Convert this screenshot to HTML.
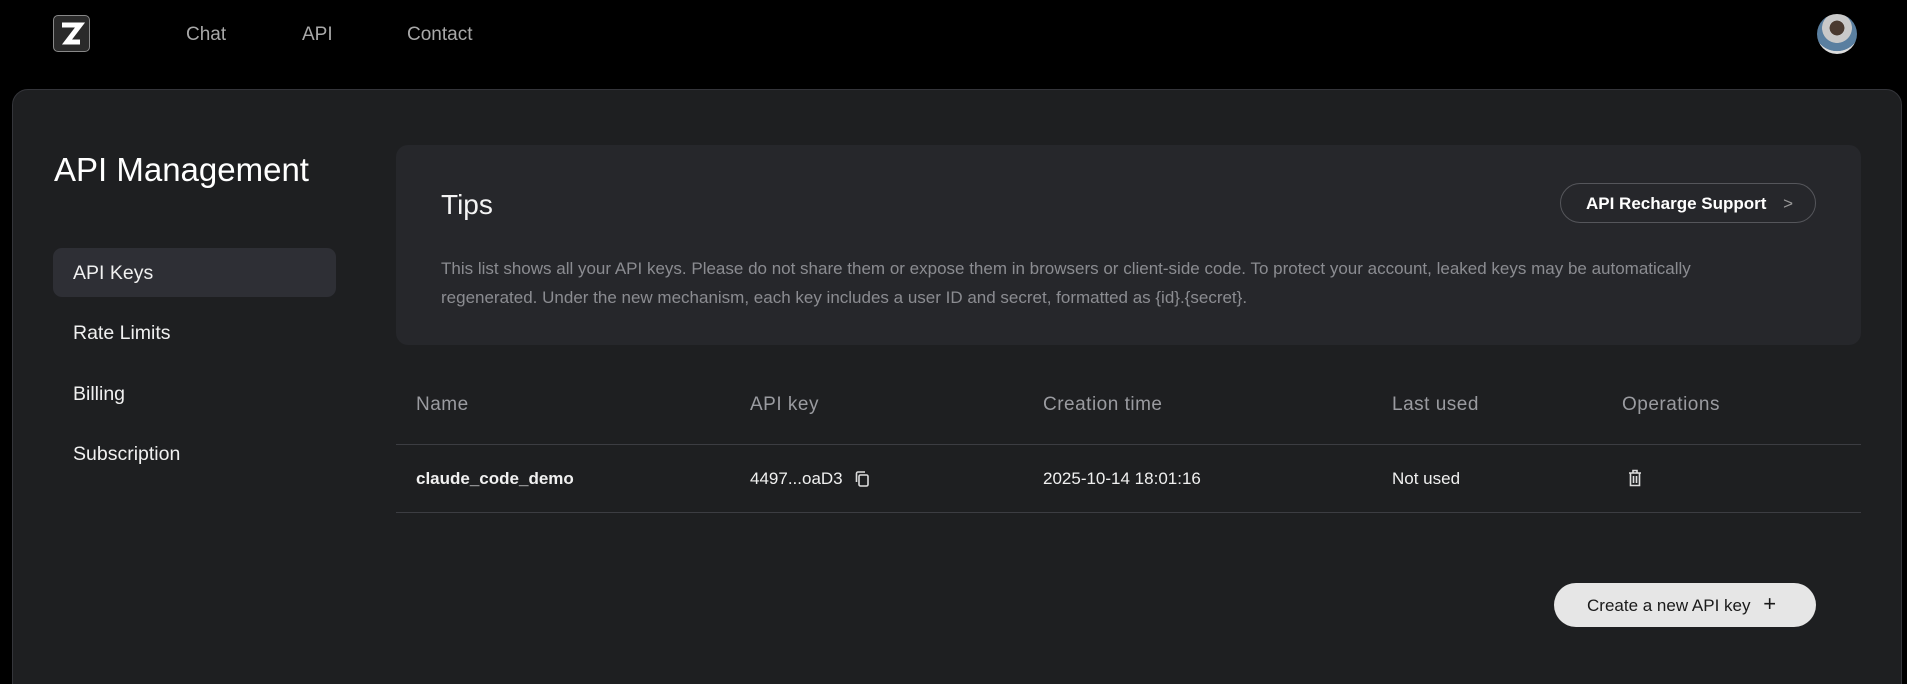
<!DOCTYPE html>
<html style="height:684px;overflow:hidden"><head><meta charset="utf-8"><style>
*{margin:0;padding:0;box-sizing:border-box}
html,body{width:1907px;height:684px;overflow:hidden}
body{background:#000;font-family:"Liberation Sans",sans-serif;position:relative;color:#fff}
.a{position:absolute;white-space:nowrap}
.nav{color:#a8a8a8;font-size:19px;top:24px}
.panel{position:absolute;left:12px;top:89px;width:1890px;height:620px;background:#1e1f21;border:1px solid #34353a;border-radius:16px}
.side{font-size:19.5px;color:#f0f0f0}
.th{font-size:19px;color:#9a9ba0;letter-spacing:.5px;top:394px}
.td{font-size:17px;color:#f0f0f0;top:469px}
</style></head><body>
<div class="a" style="left:53px;top:15px;width:37px;height:37px;border:1.5px solid #888;border-radius:5px;background:#2a2a2a">
<svg width="34" height="34" viewBox="0 0 34 34" style="position:absolute;left:0;top:0"><path d="M8 9H26L13 26H26" stroke="#fff" stroke-width="5" fill="none" stroke-linejoin="miter"/></svg></div>
<div class="a nav" style="left:186px">Chat</div>
<div class="a nav" style="left:302px">API</div>
<div class="a nav" style="left:407px">Contact</div>
<div class="a" style="left:1817px;top:14px;width:40px;height:40px;border-radius:50%;background:radial-gradient(circle at 50% 35%,#4a3a30 0 22%,#c9c9c9 23% 45%,#5a7fa0 46% 70%,#ddd 71%)"></div>
<div class="panel"></div>
<div class="a" style="left:54px;top:151px;font-size:33px;color:#fff">API Management</div>
<div class="a" style="left:53px;top:248px;width:283px;height:49px;background:#2e2f35;border-radius:9px"></div>
<div class="a side" style="left:73px;top:262px">API Keys</div>
<div class="a side" style="left:73px;top:322px">Rate Limits</div>
<div class="a side" style="left:73px;top:383px">Billing</div>
<div class="a side" style="left:73px;top:443px">Subscription</div>
<div class="a" style="left:396px;top:145px;width:1465px;height:200px;background:#26272b;border-radius:12px"></div>
<div class="a" style="left:441px;top:189px;font-size:28px;color:#f4f4f4">Tips</div>
<div class="a" style="left:1560px;top:183px;width:256px;height:40px;border:1px solid #55565b;border-radius:20px;font-size:17px;font-weight:bold;padding:10px 0 0 25px;color:#fff">API Recharge Support <span style="color:#999;font-weight:normal;margin-left:12px">&gt;</span></div>
<div class="a" style="left:441px;top:254px;font-size:17px;line-height:29px;color:#8b8c91;white-space:normal;width:1340px">This list shows all your API keys. Please do not share them or expose them in browsers or client-side code. To protect your account, leaked keys may be automatically regenerated. Under the new mechanism, each key includes a user ID and secret, formatted as {id}.{secret}.</div>
<div class="a th" style="left:416px">Name</div>
<div class="a th" style="left:750px">API key</div>
<div class="a th" style="left:1043px">Creation time</div>
<div class="a th" style="left:1392px">Last used</div>
<div class="a th" style="left:1622px">Operations</div>
<div class="a" style="left:396px;top:444px;width:1465px;height:1px;background:#3c3d42"></div>
<div class="a" style="left:396px;top:512px;width:1465px;height:1px;background:#3c3d42"></div>
<div class="a td" style="left:416px;font-weight:bold">claude_code_demo</div>
<div class="a td" style="left:750px">4497...oaD3</div>
<svg class="a" style="left:853px;top:469px" width="20" height="20" viewBox="0 0 20 20"><rect x="6" y="6" width="9" height="11" rx="1.5" stroke="#ddd" stroke-width="1.6" fill="none"/><path d="M12 3H5a1.5 1.5 0 0 0-1.5 1.5V13" stroke="#ddd" stroke-width="1.6" fill="none"/></svg>
<div class="a td" style="left:1043px">2025-10-14 18:01:16</div>
<div class="a td" style="left:1392px">Not used</div>
<svg class="a" style="left:1626px;top:468px" width="18" height="20" viewBox="0 0 18 20"><path d="M3 5H15M7 5V2.5H11V5M4.5 5V17.5H13.5V5M7.5 8V15M10.5 8V15" stroke="#ddd" stroke-width="1.6" fill="none"/></svg>
<div class="a" style="left:1554px;top:583px;width:262px;height:44px;background:#e6e6e6;border-radius:22px;color:#1a1a1a;font-size:17px;padding:12px 0 0 33px">Create a new API key <span style="font-size:22px;margin-left:8px;line-height:17px">+</span></div>
</body></html>
